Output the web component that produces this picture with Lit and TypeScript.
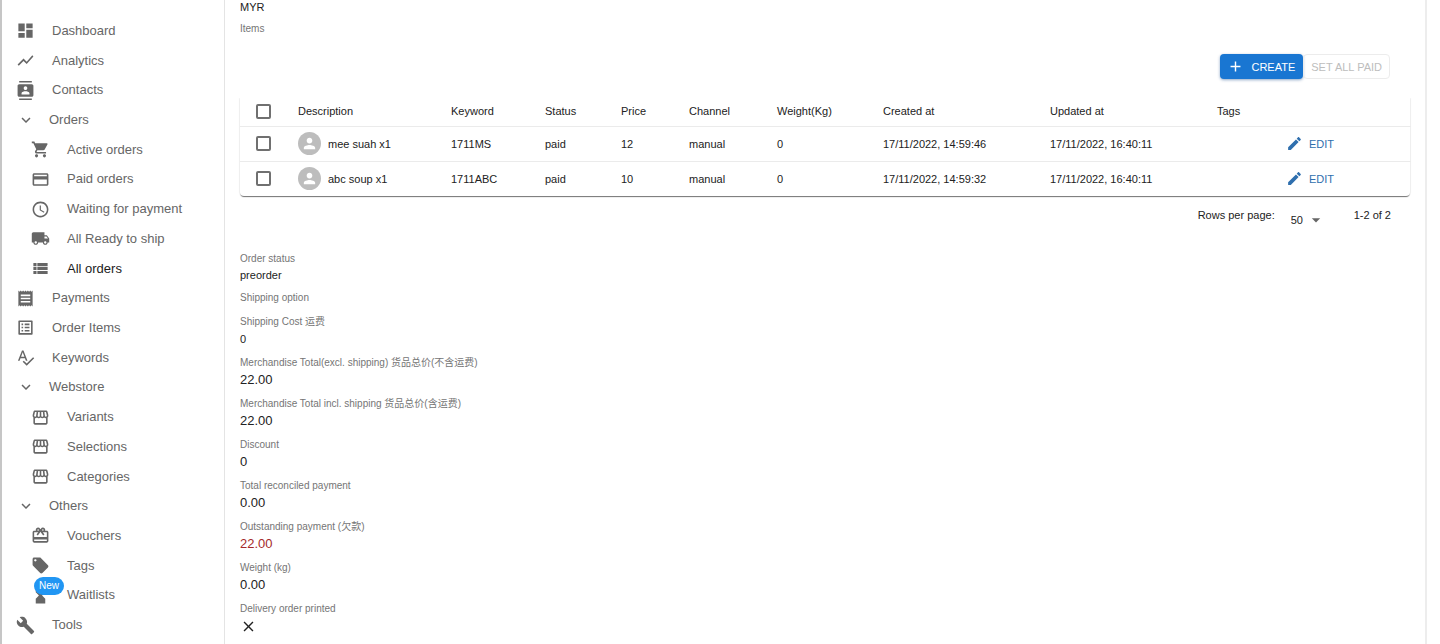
import { LitElement, html, css, svg, nothing } from "lit";
import { customElement, property } from "lit/decorators.js";

const ICONS: Record<string, string> = {
  dashboard: "M3 13h8V3H3v10zm0 8h8v-6H3v6zm10 0h8V11h-8v10zm0-18v6h8V3h-8z",
  analytics: "M3.5 18.49l6-6.01 4 4L22 6.92l-1.41-1.41-7.09 7.97-4-4L2 16.99z",
  contacts:
    "M20 0H4v2h16V0zM4 24h16v-2H4v2zM20 4H4c-1.1 0-2 .9-2 2v12c0 1.1.9 2 2 2h16c1.1 0 2-.9 2-2V6c0-1.1-.9-2-2-2zm-8 2.75c1.24 0 2.25 1.01 2.25 2.25s-1.01 2.25-2.25 2.25S9.75 10.24 9.75 9 10.76 6.75 12 6.75zM17 17H7v-1.5c0-1.67 3.33-2.5 5-2.5s5 .83 5 2.5V17z",
  chevron: "M16.59 8.59L12 13.17 7.41 8.59 6 10l6 6 6-6z",
  cart: "M7 18c-1.1 0-1.99.9-1.99 2S5.9 22 7 22s2-.9 2-2-.9-2-2-2zM1 2v2h2l3.6 7.59-1.35 2.45c-.16.28-.25.61-.25.96 0 1.1.9 2 2 2h12v-2H7.42c-.14 0-.25-.11-.25-.25l.03-.12.9-1.63h7.45c.75 0 1.41-.41 1.75-1.03l3.58-6.49c.08-.14.12-.31.12-.48 0-.55-.45-1-1-1H5.21l-.94-2H1zm16 16c-1.1 0-1.99.9-1.99 2s.89 2 1.99 2 2-.9 2-2-.9-2-2-2z",
  card: "M20 4H4c-1.11 0-1.99.89-1.99 2L2 18c0 1.11.89 2 2 2h16c1.11 0 2-.89 2-2V6c0-1.11-.89-2-2-2zm0 14H4v-6h16v6zm0-10H4V6h16v2z",
  clock:
    "M11.99 2C6.47 2 2 6.48 2 12s4.47 10 9.99 10C17.52 22 22 17.52 22 12S17.52 2 11.99 2zM12 20c-4.42 0-8-3.58-8-8s3.58-8 8-8 8 3.58 8 8-3.58 8-8 8zm.5-13H11v6l5.25 3.15.75-1.23-4.5-2.67z",
  truck:
    "M20 8h-3V4H3c-1.1 0-2 .9-2 2v11h2c0 1.66 1.34 3 3 3s3-1.34 3-3h6c0 1.66 1.34 3 3 3s3-1.34 3-3h2v-5l-3-4zM6 18.5c-.83 0-1.5-.67-1.5-1.5s.67-1.5 1.5-1.5 1.5.67 1.5 1.5-.67 1.5-1.5 1.5zm13.5-9l1.96 2.5H17V9.5h2.5zm-1.5 9c-.83 0-1.5-.67-1.5-1.5s.67-1.5 1.5-1.5 1.5.67 1.5 1.5-.67 1.5-1.5 1.5z",
  list: "M3 14h4v-4H3v4zm0 5h4v-4H3v4zM3 9h4V5H3v4zm5 5h13v-4H8v4zm0 5h13v-4H8v4zM8 5v4h13V5H8z",
  receipt:
    "M18 17H6v-2h12v2zm0-4H6v-2h12v2zm0-4H6V7h12v2zM3 22l1.5-1.5L6 22l1.5-1.5L9 22l1.5-1.5L12 22l1.5-1.5L15 22l1.5-1.5L18 22l1.5-1.5L21 22V2l-1.5 1.5L18 2l-1.5 1.5L15 2l-1.5 1.5L12 2l-1.5 1.5L9 2 7.5 3.5 6 2 4.5 3.5 3 2v20z",
  listAlt:
    "M19 5v14H5V5h14m1.1-2H3.9c-.5 0-.9.4-.9.9v16.2c0 .4.4.9.9.9h16.2c.4 0 .9-.5.9-.9V3.9c0-.5-.5-.9-.9-.9zM11 7h6v2h-6V7zm0 4h6v2h-6v-2zm0 4h6v2h-6zM7 7h2v2H7zm0 4h2v2H7zm0 4h2v2H7z",
  spellcheck:
    "M12.45 16h2.09L9.43 3H7.57L2.46 16h2.09l1.12-3h5.64l1.14 3zm-6.02-5L8.5 5.48 10.57 11H6.43zm15.16.59l-8.09 8.09L9.83 16l-1.41 1.41 5.09 5.09L23 13l-1.41-1.41z",
  store:
    "M21.9 8.89l-1.05-4.37c-.22-.9-1-1.52-1.91-1.52H5.05c-.9 0-1.69.63-1.9 1.52L2.1 8.89c-.24 1.02-.02 2.06.62 2.88.08.11.19.19.28.29V19c0 1.1.9 2 2 2h14c1.1 0 2-.9 2-2v-6.94c.09-.09.2-.18.28-.28.64-.82.87-1.87.62-2.89zm-2.99-3.9l1.05 4.37c.1.42.01.84-.25 1.17-.14.18-.44.47-.94.47-.61 0-1.14-.49-1.21-1.14L16.98 5l1.93-.01zM13 5h1.96l.54 4.52c.05.39-.07.78-.33 1.07-.22.26-.54.41-.95.41-.67 0-1.22-.59-1.22-1.31V5zM8.49 9.52L9.04 5H11v4.69c0 .72-.55 1.31-1.29 1.31-.34 0-.65-.15-.89-.41-.25-.29-.37-.68-.33-1.07zm-4.45-.16L5.05 5h1.97l-.58 4.86c-.08.65-.6 1.14-1.21 1.14-.49 0-.8-.29-.93-.47-.27-.32-.36-.75-.26-1.17zM5 19v-6.03c.08.01.15.03.23.03.87 0 1.66-.36 2.24-.95.6.6 1.4.95 2.31.95.87 0 1.65-.36 2.23-.93.59.57 1.39.93 2.29.93.84 0 1.64-.35 2.24-.95.58.59 1.37.95 2.24.95.08 0 .15-.02.23-.03V19H5z",
  gift: "M20 6h-2.18c.11-.31.18-.65.18-1 0-1.66-1.34-3-3-3-1.05 0-1.96.54-2.5 1.35l-.5.67-.5-.68C10.96 2.54 10.05 2 9 2 7.34 2 6 3.34 6 5c0 .35.07.69.18 1H4c-1.11 0-1.99.89-1.99 2L2 19c0 1.11.89 2 2 2h16c1.11 0 2-.89 2-2V8c0-1.11-.89-2-2-2zm-5-2c.55 0 1 .45 1 1s-.45 1-1 1-1-.45-1-1 .45-1 1-1zM9 4c.55 0 1 .45 1 1s-.45 1-1 1-1-.45-1-1 .45-1 1-1zm11 15H4v-2h16v2zm0-5H4V8h5.08L7 10.83 8.62 12 11 8.76l1-1.36 1 1.36L15.38 12 17 10.83 14.92 8H20v6z",
  tag: "M21.41 11.58l-9-9C12.05 2.22 11.55 2 11 2H4c-1.1 0-2 .9-2 2v7c0 .55.22 1.05.59 1.42l9 9c.36.36.86.58 1.41.58.55 0 1.05-.22 1.41-.59l7-7c.37-.36.59-.86.59-1.41 0-.55-.23-1.06-.59-1.42zM5.5 7C4.67 7 4 6.33 4 5.5S4.67 4 5.5 4 7 4.67 7 5.5 6.33 7 5.5 7z",
  hourglass: "M6 2v6h.01L6 8.01 10 12l-4 4 .01.01H6V22h12v-5.99h-.01L18 16l-4-4 4-3.99-.01-.01H18V2H6z",
  tools:
    "M22.7 19l-9.1-9.1c.9-2.3.4-5-1.5-6.9-2-2-5-2.4-7.4-1.3L9 6 6 9 1.6 4.7C.4 7.1.9 10.1 2.9 12.1c1.9 1.9 4.6 2.4 6.9 1.5l9.1 9.1c.4.4 1 .4 1.4 0l2.3-2.3c.5-.4.5-1.1.1-1.4z",
  person:
    "M12 12c2.21 0 4-1.79 4-4s-1.79-4-4-4-4 1.79-4 4 1.79 4 4 4zm0 2c-2.67 0-8 1.34-8 4v2h16v-2c0-2.66-5.33-4-8-4z",
  plus: "M19 13h-6v6h-2v-6H5v-2h6V5h2v6h6v2z",
  edit: "M3 17.25V21h3.75L17.81 9.94l-3.75-3.75L3 17.25zM20.71 7.04c.39-.39.39-1.02 0-1.41l-2.34-2.34c-.39-.39-1.02-.39-1.41 0l-1.83 1.83 3.75 3.75 1.83-1.83z",
  close:
    "M19 6.41L17.59 5 12 10.59 6.41 5 5 6.41 10.59 12 5 17.59 6.41 19 12 13.41 17.59 19 19 17.59 13.41 12z",
  caret: "M7 10l5 5 5-5z",
};

@customElement("app-icon")
class AppIcon extends LitElement {
  @property() name = "";
  static styles = css`
    :host { display: inline-flex; flex: none; width: 19px; height: 19px; }
    svg { width: 100%; height: 100%; fill: currentColor; display: block; }
  `;
  render() {
    return html`<svg viewBox="0 0 24 24" aria-hidden="true">${svg`<path d=${ICONS[this.name]}></path>`}</svg>`;
  }
}

interface NavItem { label: string; icon: string; kind?: "group" | "sub"; active?: boolean; badge?: string }

const NAV: NavItem[] = [
  { label: "Dashboard", icon: "dashboard" },
  { label: "Analytics", icon: "analytics" },
  { label: "Contacts", icon: "contacts" },
  { label: "Orders", icon: "chevron", kind: "group" },
  { label: "Active orders", icon: "cart", kind: "sub" },
  { label: "Paid orders", icon: "card", kind: "sub" },
  { label: "Waiting for payment", icon: "clock", kind: "sub" },
  { label: "All Ready to ship", icon: "truck", kind: "sub" },
  { label: "All orders", icon: "list", kind: "sub", active: true },
  { label: "Payments", icon: "receipt" },
  { label: "Order Items", icon: "listAlt" },
  { label: "Keywords", icon: "spellcheck" },
  { label: "Webstore", icon: "chevron", kind: "group" },
  { label: "Variants", icon: "store", kind: "sub" },
  { label: "Selections", icon: "store", kind: "sub" },
  { label: "Categories", icon: "store", kind: "sub" },
  { label: "Others", icon: "chevron", kind: "group" },
  { label: "Vouchers", icon: "gift", kind: "sub" },
  { label: "Tags", icon: "tag", kind: "sub" },
  { label: "Waitlists", icon: "hourglass", kind: "sub", badge: "New" },
  { label: "Tools", icon: "tools" },
];

@customElement("side-nav")
class SideNav extends LitElement {
  static styles = css`
    :host { display: block; box-sizing: border-box; border-left: 2px solid #c6c6c6; }
    nav {
      box-sizing: border-box;
      height: 100vh;
      min-height: 560px;
      padding: 16px 0 4px;
      display: grid;
      grid-auto-rows: 1fr;
    }
    .item {
      display: flex;
      align-items: center;
      gap: 17px;
      padding: 0 14px;
      border: 0;
      background: none;
      color: #666;
      font: inherit;
      font-size: 13px;
      line-height: 20px;
      text-align: left;
      text-decoration: none;
      cursor: pointer;
    }
    .group { gap: 13px; }
    .group app-icon { width: 18px; height: 18px; padding: 0 1px; }
    .sub { padding-left: 29px; }
    .active { color: #1c1c1c; }
    .active app-icon { color: #666; }
    .mark { position: relative; display: flex; }
    .badge {
      position: absolute;
      top: -9px;
      left: 3px;
      padding: 0 5px;
      border-radius: 9px;
      background: #2196f3;
      color: #fff;
      font-size: 10px;
      line-height: 18px;
    }
  `;
  render() {
    return html`<nav aria-label="Main">
      ${NAV.map((n) => {
        const body = html`<span class="mark"><app-icon name=${n.icon}></app-icon>${
          n.badge ? html`<span class="badge">${n.badge}</span>` : nothing
        }</span><span>${n.label}</span>`;
        return n.kind === "group"
          ? html`<button class="item group" aria-expanded="true">${body}</button>`
          : html`<a class="item ${n.kind ?? ""} ${n.active ? "active" : ""}" href="#">${body}</a>`;
      })}
    </nav>`;
  }
}

const COLUMNS = [
  ["description", "Description"],
  ["keyword", "Keyword"],
  ["status", "Status"],
  ["price", "Price"],
  ["channel", "Channel"],
  ["weight", "Weight(Kg)"],
  ["created", "Created at"],
  ["updated", "Updated at"],
  ["tags", "Tags"],
];

const ROWS = [
  ["mee suah x1", "1711MS", "paid", "12", "manual", "0", "17/11/2022, 14:59:46", "17/11/2022, 16:40:11", ""],
  ["abc soup x1", "1711ABC", "paid", "10", "manual", "0", "17/11/2022, 14:59:32", "17/11/2022, 16:40:11", ""],
];

@customElement("order-items")
class OrderItems extends LitElement {
  static styles = css`
    :host { display: block; font-size: 11px; line-height: 16px; }
    button, select { font: inherit; cursor: pointer; }
    .actions { display: flex; justify-content: flex-end; padding-right: 20px; }
    .btn {
      display: flex;
      align-items: center;
      box-sizing: border-box;
      height: 25px;
      border-radius: 4px;
      text-transform: uppercase;
      white-space: nowrap;
    }
    .btn app-icon { width: 17px; height: 17px; }
    .create {
      gap: 7px;
      padding: 0 8px 0 7px;
      border: 0;
      background: #1976d2;
      color: #fff;
      box-shadow: 0 1px 3px rgba(0, 60, 130, 0.45);
    }
    .paid { padding: 0 7px; border: 1px solid #ececec; background: none; color: #bdbdbd; }
    .card {
      margin-top: 19px;
      border-radius: 0 0 4px 4px;
      box-shadow: 0 2px 1px -1px rgba(0, 0, 0, 0.4), 0 1px 1px rgba(0, 0, 0, 0.2), 0 0 1px 1px rgba(0, 0, 0, 0.05);
      clip-path: inset(0 -4px -4px -4px);
    }
    table { width: 100%; table-layout: fixed; border-collapse: collapse; color: #222; }
    th, td { padding: 0 0 0 13px; text-align: left; font-weight: 400; white-space: nowrap; }
    thead th { height: 28px; padding-bottom: 1px; box-sizing: border-box; }
    tbody td { height: 35px; box-sizing: border-box; border-top: 1px solid #ebebeb; }
    .check { width: 45px; }
    .description { width: 153px; }
    .keyword { width: 94px; }
    .status { width: 76px; }
    .price { width: 68px; }
    .channel { width: 88px; }
    .weight { width: 106px; }
    .created, .updated { width: 167px; }
    .tags { width: 67px; }
    .edit-col { width: 140px; }
    input {
      appearance: none;
      display: block;
      box-sizing: border-box;
      width: 15px;
      height: 15px;
      margin: 0 0 0 3px;
      border: 2px solid #707070;
      border-radius: 2px;
      cursor: pointer;
    }
    input:checked { background: #1976d2; border-color: #1976d2; }
    .who { display: flex; align-items: center; gap: 7px; }
    .avatar {
      display: flex;
      align-items: center;
      justify-content: center;
      width: 23px;
      height: 23px;
      border-radius: 50%;
      background: #bdbdbd;
      color: #fff;
    }
    .avatar app-icon { width: 17px; height: 17px; }
    .edit { gap: 6px; padding: 0 2px; border: 0; background: none; color: #2f6fae; }
    .pager {
      display: flex;
      justify-content: flex-end;
      align-items: flex-start;
      padding: 11px 19px 0 0;
      color: #222;
    }
    .size { position: relative; display: flex; margin: 5px 30px 0 16px; }
    .size app-icon { position: absolute; right: -2px; top: -2px; width: 20px; height: 20px; color: #666; pointer-events: none; }
    select { appearance: none; border: 0; background: none; color: inherit; width: 33px; height: 16px; padding: 0; }
  `;
  render() {
    return html`
      <div class="actions">
        <button class="btn create"><app-icon name="plus"></app-icon>Create</button>
        <button class="btn paid" disabled>Set all paid</button>
      </div>
      <div class="card">
        <table>
          <thead>
            <tr>
              <th class="check"><input type="checkbox" aria-label="Select all" /></th>
              ${COLUMNS.map(([key, label]) => html`<th class=${key}>${label}</th>`)}
              <th class="edit-col"></th>
            </tr>
          </thead>
          <tbody>
            ${ROWS.map(
              (row) => html`<tr>
                <td><input type="checkbox" aria-label="Select ${row[0]}" /></td>
                ${row.map((cell, i) =>
                  i === 0
                    ? html`<td><div class="who"><span class="avatar"><app-icon name="person"></app-icon></span>${cell}</div></td>`
                    : html`<td>${cell}</td>`
                )}
                <td><button class="btn edit"><app-icon name="edit"></app-icon>Edit</button></td>
              </tr>`
            )}
          </tbody>
        </table>
      </div>
      <div class="pager">
        <label for="rows">Rows per page:</label>
        <span class="size">
          <select id="rows"><option>50</option><option>25</option><option>10</option></select>
          <app-icon name="caret"></app-icon>
        </span>
        <span>1-2 of 2</span>
      </div>
    `;
  }
}

const TOTALS: [string, string, string][] = [
  ["Shipping Cost 运费", "0", "small"],
  ["Merchandise Total(excl. shipping) 货品总价(不含运费)", "22.00", ""],
  ["Merchandise Total incl. shipping 货品总价(含运费)", "22.00", ""],
  ["Discount", "0", ""],
  ["Total reconciled payment", "0.00", ""],
  ["Outstanding payment (欠款)", "22.00", "due"],
  ["Weight (kg)", "0.00", ""],
];

@customElement("app-root")
class AppRoot extends LitElement {
  static styles = css`
    :host {
      display: grid;
      grid-template-columns: 224px minmax(0, 1fr);
      height: 100vh;
      overflow: hidden;
      background: #fff;
      font-family: "Liberation Sans", "Noto Sans CJK SC", sans-serif;
      color: #222;
    }
    main {
      box-sizing: border-box;
      margin-right: 13px;
      padding: 0 15px;
      border-left: 1px solid #e4e4e4;
      border-right: 2px solid #ededed;
    }
    dl, dd, dt { margin: 0; }
    dt { font-size: 10px; line-height: 14px; color: #757575; }
    dd { font-size: 13px; line-height: 20px; height: 20px; }
    .small { font-size: 11px; }
    .due { color: #a52a2a; }
    .head dd { line-height: 14px; height: 22px; }
    .head { padding-bottom: 18px; }
    .state { padding-top: 24px; }
    .totals { display: grid; gap: 7px; padding-top: 10px; }
    .tight { line-height: 18px; height: 25px; }
    .no { display: flex; align-items: center; }
    .no app-icon { width: 17px; height: 17px; }
  `;
  render() {
    return html`
      <side-nav></side-nav>
      <main>
        <dl class="head">
          <dd class="small">MYR</dd>
          <dt>Items</dt>
        </dl>
        <order-items></order-items>
        <dl class="state">
          <dt>Order status</dt>
          <dd class="small tight">preorder</dd>
          <dt>Shipping option</dt>
        </dl>
        <dl class="totals">
          ${TOTALS.map(([k, v, c]) => html`<div><dt>${k}</dt><dd class=${c}>${v}</dd></div>`)}
          <div>
            <dt>Delivery order printed</dt>
            <dd class="no"><app-icon name="close" role="img" aria-label="No"></app-icon></dd>
          </div>
        </dl>
      </main>
    `;
  }
}
